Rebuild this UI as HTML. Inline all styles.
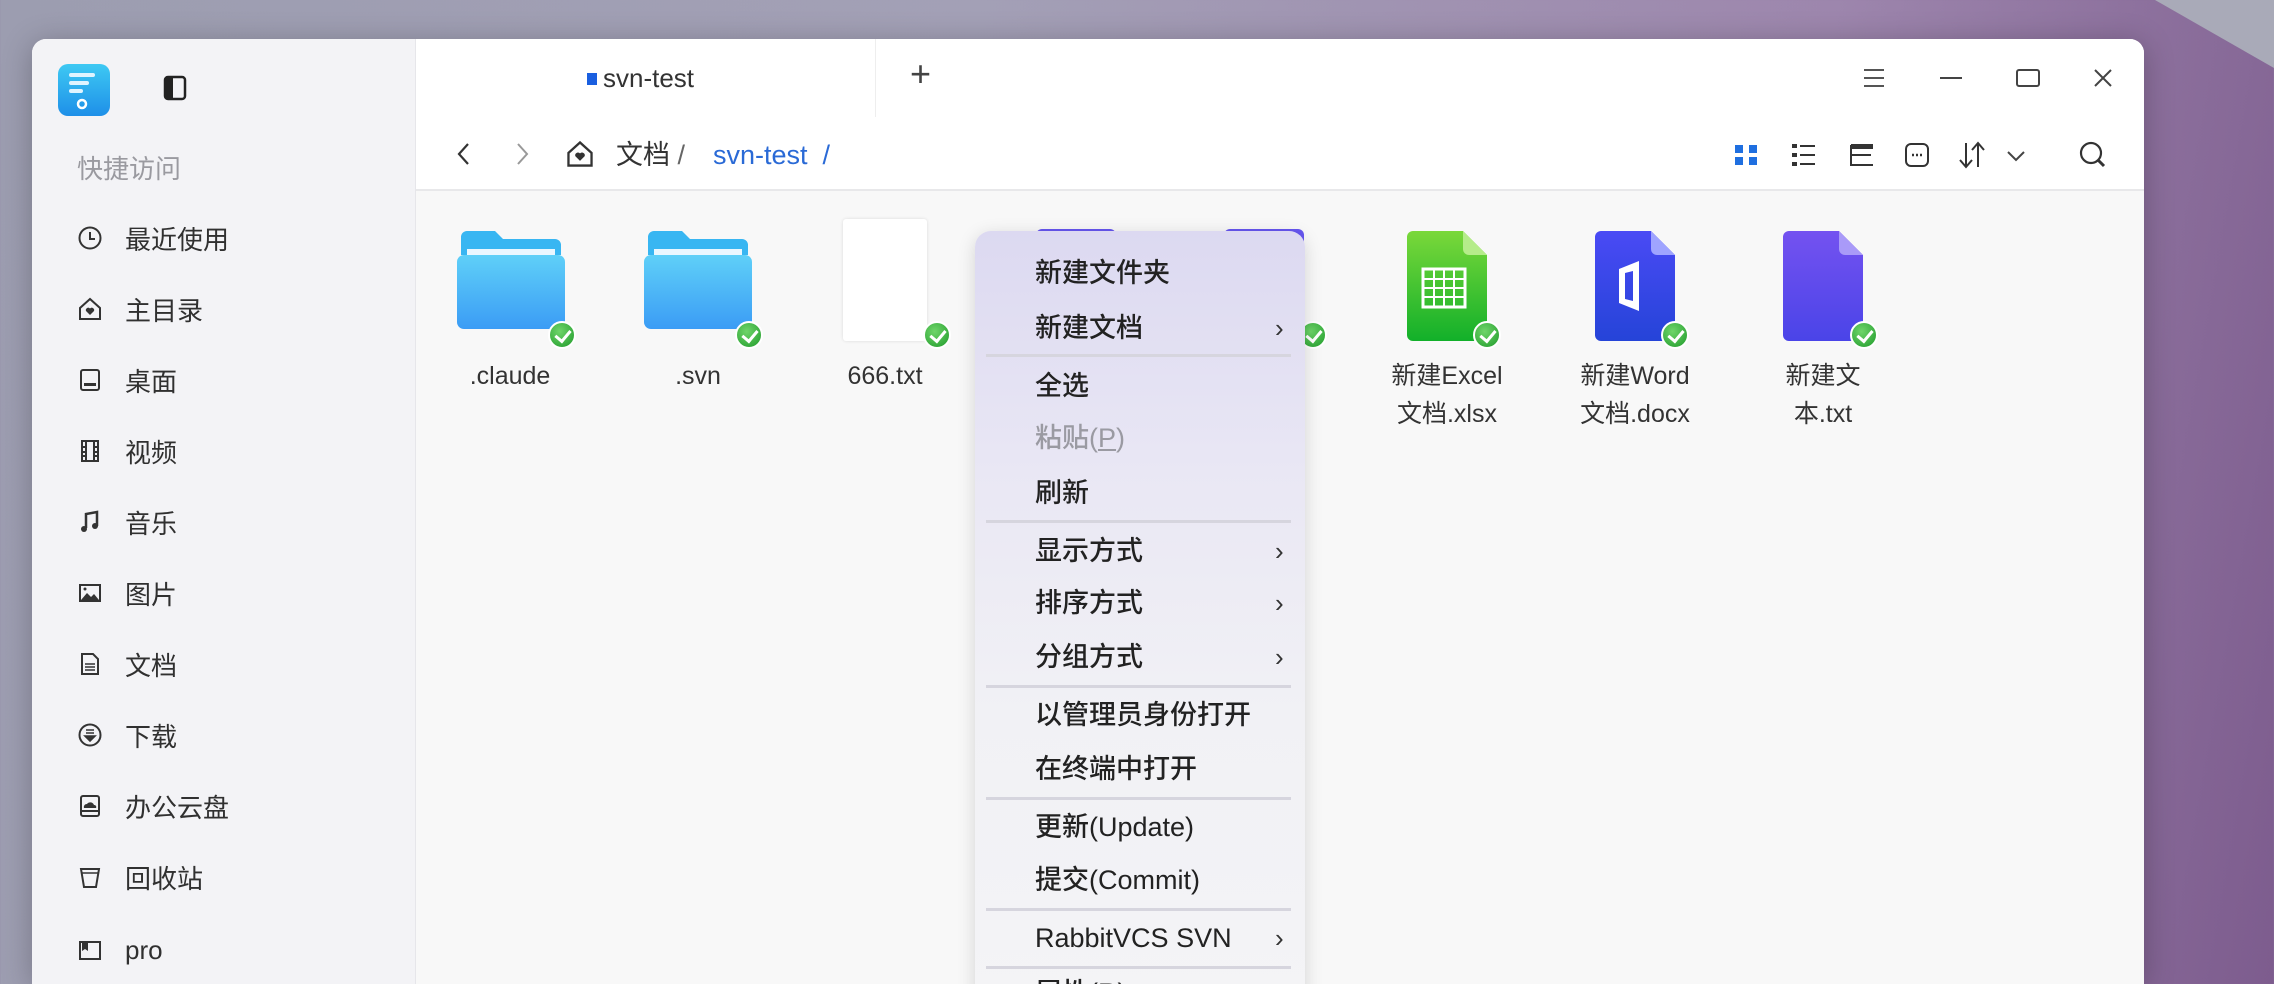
<!DOCTYPE html>
<html><head><meta charset="utf-8"><style>
*{margin:0;padding:0;box-sizing:border-box}
html,body{width:2274px;height:984px;overflow:hidden}
body{position:relative;font-family:"Liberation Sans","Noto Sans CJK SC",sans-serif;
background:linear-gradient(100deg,#9c9db0 0%,#a3a0b6 40%,#9d86ad 75%,#7d5c8e 100%);}
.deco{position:absolute;left:0;top:0;width:2274px;height:984px;background:#a9aab8;clip-path:polygon(2155px 0,2274px 0,2274px 68px)}
.win{position:absolute;left:32px;top:39px;width:2112px;height:945px;border-radius:14px 14px 0 0;overflow:hidden;background:#f8f8f8;box-shadow:0 4px 30px rgba(0,0,0,.25)}
.side{position:absolute;left:0;top:0;width:384px;height:100%;background:#f3f3f6;border-right:1px solid #e6e6ea}
.abs{position:absolute}
.hdr{position:absolute;left:384px;top:0;right:0;height:152px;background:#fff;border-bottom:2px solid #e8e8ea}
.si{position:absolute;left:45px;font-size:26px;color:#303030;display:flex;align-items:center;height:40px}
.si svg{width:26px;height:26px;margin-right:22px}
.lbl{position:absolute;width:160px;text-align:center;font-size:25px;color:#333;line-height:38px}
.menu{position:absolute;left:975px;top:231px;width:330px;height:800px;border-radius:16px;background:linear-gradient(180deg,#dcd9f1 0%,#e9e7f4 30%,#f1f1f5 60%,#f4f4f6 100%);box-shadow:0 4px 18px rgba(0,0,0,.15)}
.mi{position:absolute;left:60px;font-size:27px;font-weight:500;color:#222;line-height:40px;transform:translateY(-20px)}
.ar{position:absolute;left:300px;font-size:26px;color:#333;transform:translateY(-20px);line-height:40px}
.sep{position:absolute;left:11px;width:305px;height:3px;background:#d6d5de}
.chk{position:absolute;width:28px;height:28px;border-radius:50%;background:radial-gradient(circle at 40% 35%,#6fd56a,#1f9a2a);border:2px solid #fff}
.chk:after{content:"";position:absolute;left:8px;top:4px;width:7px;height:12px;border:solid #fff;border-width:0 3px 3px 0;transform:rotate(40deg)}
</style></head><body>
<div class="deco"></div>
<div class="win">
 <div class="side">
  <svg class="abs" style="left:25px;top:24px" width="54" height="54" viewBox="0 0 54 54"><defs><linearGradient id="lg" x1="0" y1="0" x2="0" y2="1"><stop offset="0" stop-color="#3ec9f3"/><stop offset="1" stop-color="#1e8fe8"/></linearGradient></defs><rect x="1" y="1" width="52" height="52" rx="10" fill="url(#lg)"/><rect x="12" y="10" width="26" height="4" rx="2" fill="#dff4ff"/><rect x="12" y="18" width="20" height="4" rx="2" fill="#dff4ff"/><rect x="12" y="26" width="14" height="4" rx="2" fill="#dff4ff"/><circle cx="25" cy="41" r="4" fill="none" stroke="#fff" stroke-width="2.5"/></svg>
  <svg class="abs" style="left:130px;top:36px" width="26" height="26" viewBox="0 0 26 26"><rect x="3" y="2" width="20" height="22" rx="3" fill="none" stroke="#222" stroke-width="2.5"/><rect x="3" y="2" width="8" height="22" fill="#222"/></svg>
  <div class="abs" style="left:45px;top:110px;font-size:26px;color:#9a9aa0">快捷访问</div>
  <div class="si" style="top:179px"><svg viewBox="0 0 26 26"><circle cx="13" cy="13" r="10.5" fill="none" stroke="#333" stroke-width="2"/><path d="M13 7v7h5" fill="none" stroke="#333" stroke-width="2"/></svg>最近使用</div>
  <div class="si" style="top:250px"><svg viewBox="0 0 26 26"><path d="M13 3L3 12v11h20V12z" fill="none" stroke="#333" stroke-width="2"/><path d="M13 19l-4-4a2.4 2.4 0 014-2.5a2.4 2.4 0 014 2.5z" fill="#333"/></svg>主目录</div>
  <div class="si" style="top:321px"><svg viewBox="0 0 26 26"><rect x="4" y="3" width="18" height="20" rx="2" fill="none" stroke="#333" stroke-width="2"/><rect x="7" y="16" width="12" height="3" fill="#333"/></svg>桌面</div>
  <div class="si" style="top:392px"><svg viewBox="0 0 26 26"><rect x="5" y="3" width="16" height="20" fill="none" stroke="#333" stroke-width="2"/><path d="M9 3v20M17 3v20M5 9h4M5 14h4M5 18h4M17 9h4M17 14h4M17 18h4" stroke="#333" stroke-width="2"/></svg>视频</div>
  <div class="si" style="top:463px"><svg viewBox="0 0 26 26"><path d="M9 19V5l11-2v14" fill="none" stroke="#333" stroke-width="2.5"/><circle cx="7" cy="20" r="3" fill="#333"/><circle cx="18" cy="17" r="3" fill="#333"/></svg>音乐</div>
  <div class="si" style="top:534px"><svg viewBox="0 0 26 26"><rect x="3" y="5" width="20" height="16" fill="none" stroke="#333" stroke-width="2"/><path d="M4 20l6-7 4 4 3-3 5 6z" fill="#333"/><circle cx="8" cy="9" r="1.5" fill="#333"/></svg>图片</div>
  <div class="si" style="top:605px"><svg viewBox="0 0 26 26"><path d="M5 3h11l5 5v15H5z" fill="none" stroke="#333" stroke-width="2"/><path d="M8 13h10M8 16h10M8 19h10" stroke="#333" stroke-width="1.6"/></svg>文档</div>
  <div class="si" style="top:676px"><svg viewBox="0 0 26 26"><circle cx="13" cy="13" r="10.5" fill="none" stroke="#333" stroke-width="2"/><path d="M9 8h8M9 11h8M8 14h10l-5 5z" stroke="#333" stroke-width="1.6" fill="#333"/></svg>下载</div>
  <div class="si" style="top:747px"><svg viewBox="0 0 26 26"><rect x="4" y="3" width="18" height="20" rx="2" fill="none" stroke="#333" stroke-width="2"/><path d="M7 15a3 3 0 013-4a4 4 0 017 1a2 2 0 012 3z" fill="#333"/><path d="M4 18h18" stroke="#333" stroke-width="2"/></svg>办公云盘</div>
  <div class="si" style="top:818px"><svg viewBox="0 0 26 26"><path d="M4 5h18l-3 18H7z" fill="none" stroke="#333" stroke-width="2"/><path d="M4 9h18" stroke="#333" stroke-width="1.5"/></svg>回收站</div>
  <div class="si" style="top:891px"><svg viewBox="0 0 26 26"><rect x="3" y="5" width="20" height="17" fill="none" stroke="#333" stroke-width="2"/><path d="M5 5h6v9l-3-2-3 2z" fill="#333"/></svg>pro</div>
 </div>
 <div class="hdr">
  <div class="abs" style="left:171px;top:26px;font-size:26px;color:#333;line-height:26px"><span style="display:inline-block;width:10px;height:12px;background:#1a5fe0;margin-right:6px;vertical-align:2px"></span>svn-test</div>
  <div class="abs" style="left:459px;top:0;width:1px;height:78px;background:#eee"></div>
  <div class="abs" style="left:494px;top:14px;font-size:36px;color:#444;font-weight:300">+</div>
  <svg class="abs" style="left:1443px;top:24px" width="30" height="30" viewBox="0 0 30 30"><path d="M5 7h20M5 15h20M5 23h20" stroke="#555" stroke-width="2"/></svg>
  <svg class="abs" style="left:1520px;top:24px" width="30" height="30" viewBox="0 0 30 30"><path d="M4 15h22" stroke="#444" stroke-width="2"/></svg>
  <svg class="abs" style="left:1597px;top:24px" width="30" height="30" viewBox="0 0 30 30"><rect x="4" y="7" width="22" height="16" rx="2" fill="none" stroke="#444" stroke-width="2"/></svg>
  <svg class="abs" style="left:1672px;top:24px" width="30" height="30" viewBox="0 0 30 30"><path d="M7 7l16 16M23 7L7 23" stroke="#444" stroke-width="2"/></svg>
  <svg class="abs" style="left:36px;top:100px" width="24" height="30" viewBox="0 0 24 30"><path d="M16 5L7 15l9 10" fill="none" stroke="#333" stroke-width="2.2"/></svg>
  <svg class="abs" style="left:94px;top:100px" width="24" height="30" viewBox="0 0 24 30"><path d="M8 5l9 10-9 10" fill="none" stroke="#999" stroke-width="2"/></svg>
  <svg class="abs" style="left:149px;top:100px" width="30" height="30" viewBox="0 0 26 26"><path d="M13 3L3 12v11h20V12z" fill="none" stroke="#333" stroke-width="2"/><path d="M13 19l-4-4a2.4 2.4 0 014-2.5a2.4 2.4 0 014 2.5z" fill="#333"/></svg>
  <div class="abs" style="left:200px;top:98px;font-size:27px;color:#333;line-height:36px">文档 <span style="color:#666">/</span></div>
  <div class="abs" style="left:297px;top:98px;font-size:27px;color:#2a6ad6;line-height:36px">svn-test&nbsp; /</div>
  <svg class="abs" style="left:1316px;top:102px" width="28" height="28" viewBox="0 0 28 28"><rect x="3" y="4" width="8" height="8" fill="#1f6fe0"/><rect x="17" y="4" width="8" height="8" fill="#1f6fe0"/><rect x="3" y="16" width="8" height="8" fill="#1f6fe0"/><rect x="17" y="16" width="8" height="8" fill="#1f6fe0"/></svg>
  <svg class="abs" style="left:1373px;top:102px" width="28" height="28" viewBox="0 0 28 28"><path d="M3 5h5M3 14h5M3 23h5" stroke="#333" stroke-width="4"/><path d="M11 5h15M11 14h15M11 23h15" stroke="#333" stroke-width="2"/></svg>
  <svg class="abs" style="left:1431px;top:102px" width="28" height="28" viewBox="0 0 28 28"><path d="M4 4v20h22M4 14h20" fill="none" stroke="#333" stroke-width="2"/><rect x="4" y="3" width="22" height="5" fill="#333"/></svg>
  <svg class="abs" style="left:1487px;top:102px" width="28" height="28" viewBox="0 0 28 28"><rect x="3" y="3" width="22" height="22" rx="5" fill="none" stroke="#333" stroke-width="2"/><path d="M9 14h2M13 14h2M17 14h2" stroke="#333" stroke-width="2.5"/></svg>
  <svg class="abs" style="left:1540px;top:100px" width="32" height="32" viewBox="0 0 32 32"><path d="M10 4v24M4 21l6 7 6-7M22 28V4M16 11l6-7 6 7" fill="none" stroke="#333" stroke-width="2"/></svg>
  <svg class="abs" style="left:1587px;top:104px" width="26" height="26" viewBox="0 0 26 26"><path d="M5 9l8 8 8-8" fill="none" stroke="#444" stroke-width="2"/></svg>
  <svg class="abs" style="left:1661px;top:100px" width="32" height="32" viewBox="0 0 32 32"><circle cx="14" cy="14" r="10" fill="none" stroke="#333" stroke-width="2.2"/><path d="M21 21l6 6" stroke="#333" stroke-width="3"/></svg>
 </div>
 <div class="abs" style="left:0;top:0">
  <svg class="abs" style="left:423px;top:190px" width="112" height="102" viewBox="0 0 112 102"><defs><linearGradient id="fg" x1="0" y1="0" x2="0" y2="1"><stop offset="0" stop-color="#5fd0f8"/><stop offset="1" stop-color="#3b9cf5"/></linearGradient></defs><path d="M6 8a6 6 0 016-6h28l8 8h52a6 6 0 016 6v10H6z" fill="#38b6f2"/><rect x="12" y="20" width="88" height="14" fill="#eaf7ff"/><rect x="2" y="26" width="108" height="74" rx="7" fill="url(#fg)"/></svg>
  <svg class="abs" style="left:610px;top:190px" width="112" height="102" viewBox="0 0 112 102"><path d="M6 8a6 6 0 016-6h28l8 8h52a6 6 0 016 6v10H6z" fill="#38b6f2"/><rect x="12" y="20" width="88" height="14" fill="#eaf7ff"/><rect x="2" y="26" width="108" height="74" rx="7" fill="url(#fg)"/></svg>
  <div class="abs" style="left:811px;top:180px;width:84px;height:122px;background:#fff;border-radius:3px;box-shadow:0 0 3px rgba(0,0,0,.12)"></div>
  <div class="abs" style="left:1004px;top:190px;width:80px;height:110px;background:#6656f0;border-radius:6px"></div>
  <div class="abs" style="left:1192px;top:190px;width:80px;height:110px;background:#6656f0;border-radius:6px"></div>
  <svg class="abs" style="left:1373px;top:190px" width="84" height="112" viewBox="0 0 84 112"><defs><linearGradient id="xg" x1="0" y1="0" x2="0" y2="1"><stop offset="0" stop-color="#7ad83a"/><stop offset="1" stop-color="#12b02a"/></linearGradient></defs><path d="M8 2h50l24 24v80a6 6 0 01-6 6H8a6 6 0 01-6-6V8a6 6 0 016-6z" fill="url(#xg)"/><path d="M58 2v18a6 6 0 006 6h18z" fill="#b5ec8a"/><rect x="18" y="40" width="42" height="38" fill="none" stroke="#fff" stroke-width="3"/><path d="M29 40v38M39 40v38M49 40v38M18 50h42M18 59h42M18 68h42" stroke="#fff" stroke-width="2"/></svg>
  <svg class="abs" style="left:1561px;top:190px" width="84" height="112" viewBox="0 0 84 112"><defs><linearGradient id="wg" x1="0" y1="0" x2="0" y2="1"><stop offset="0" stop-color="#4a4af5"/><stop offset="1" stop-color="#2544d8"/></linearGradient></defs><path d="M8 2h50l24 24v80a6 6 0 01-6 6H8a6 6 0 01-6-6V8a6 6 0 016-6z" fill="url(#wg)"/><path d="M58 2v18a6 6 0 006 6h18z" fill="#9fa4ff"/><path d="M26 40l20-8v50l-20-8zM32 44v26l8 2V42z" fill="#fff" fill-rule="evenodd"/></svg>
  <svg class="abs" style="left:1749px;top:190px" width="84" height="112" viewBox="0 0 84 112"><defs><linearGradient id="tg" x1="0" y1="0" x2="0" y2="1"><stop offset="0" stop-color="#7452f0"/><stop offset="1" stop-color="#4a44e8"/></linearGradient></defs><path d="M8 2h50l24 24v80a6 6 0 01-6 6H8a6 6 0 01-6-6V8a6 6 0 016-6z" fill="url(#tg)"/><path d="M58 2v18a6 6 0 006 6h18z" fill="#a99af8"/></svg>
  <div class="chk" style="left:516px;top:282px"></div>
  <div class="chk" style="left:703px;top:282px"></div>
  <div class="chk" style="left:891px;top:282px"></div>
  <div class="chk" style="left:1267px;top:282px"></div>
  <div class="chk" style="left:1441px;top:282px"></div>
  <div class="chk" style="left:1629px;top:282px"></div>
  <div class="chk" style="left:1818px;top:282px"></div>
  <div class="lbl" style="left:398px;top:318px">.claude</div>
  <div class="lbl" style="left:586px;top:318px">.svn</div>
  <div class="lbl" style="left:773px;top:318px">666.txt</div>
  <div class="lbl" style="left:1335px;top:318px">新建Excel<br>文档.xlsx</div>
  <div class="lbl" style="left:1523px;top:318px">新建Word<br>文档.docx</div>
  <div class="lbl" style="left:1711px;top:318px">新建文<br>本.txt</div>
 </div>
</div>
<div class="menu">
 <div class="mi" style="top:42px">新建文件夹</div>
 <div class="mi" style="top:97px">新建文档</div><div class="ar" style="top:97px">›</div>
 <div class="sep" style="top:123px"></div>
 <div class="mi" style="top:155px">全选</div>
 <div class="mi" style="top:207px;color:#9a9aa2">粘贴(<u>P</u>)</div>
 <div class="mi" style="top:262px">刷新</div>
 <div class="sep" style="top:289px"></div>
 <div class="mi" style="top:320px">显示方式</div><div class="ar" style="top:320px">›</div>
 <div class="mi" style="top:372px">排序方式</div><div class="ar" style="top:372px">›</div>
 <div class="mi" style="top:426px">分组方式</div><div class="ar" style="top:426px">›</div>
 <div class="sep" style="top:454px"></div>
 <div class="mi" style="top:484px">以管理员身份打开</div>
 <div class="mi" style="top:538px">在终端中打开</div>
 <div class="sep" style="top:566px"></div>
 <div class="mi" style="top:596px">更新(Update)</div>
 <div class="mi" style="top:649px">提交(Commit)</div>
 <div class="sep" style="top:677px"></div>
 <div class="mi" style="top:707px">RabbitVCS SVN</div><div class="ar" style="top:707px">›</div>
 <div class="sep" style="top:735px"></div>
 <div class="mi" style="top:762px">属性(R)</div>
</div>
</body></html>
